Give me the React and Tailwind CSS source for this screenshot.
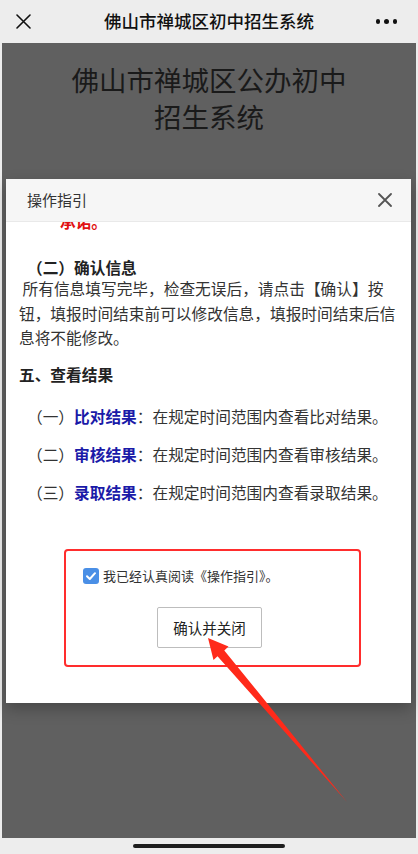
export default function App() {
  const font = { fontFamily: '"Noto Sans CJK SC", "Noto Sans", sans-serif' };
  return (
    <div className="relative w-[418px] h-[854px] overflow-hidden bg-[#ededed] flex flex-col" style={font}>
      {/* top bar */}
      <header className="h-[43px] shrink-0 flex items-center justify-between pl-[16px] pr-[21px] relative">
        <svg width="15" height="15" viewBox="0 0 15 15" className="block">
          <path d="M1 1 L14 14 M14 1 L1 14" stroke="#111" strokeWidth="1.6" strokeLinecap="round" />
        </svg>
        <div className="absolute left-0 right-0 top-0 h-[43px] flex items-center justify-center text-[17.5px] text-[#111] font-medium pointer-events-none">
          佛山市禅城区初中招生系统
        </div>
        <div className="flex gap-[4px] items-center">
          <span className="w-[4.5px] h-[4.5px] rounded-full bg-[#111]" />
          <span className="w-[4.5px] h-[4.5px] rounded-full bg-[#111]" />
          <span className="w-[4.5px] h-[4.5px] rounded-full bg-[#111]" />
        </div>
      </header>

      {/* overlay page */}
      <main className="flex-1 mx-[2px] bg-[#606060] flex flex-col">
        <div className="pt-[18px] text-center text-[27.5px] leading-[37px] text-[#1a1a1a] font-normal">
          佛山市禅城区公办初中
          <br />
          招生系统
        </div>

        {/* dialog */}
        <div className="mt-[44px] ml-[4px] w-[405px] h-[524px] bg-white flex flex-col shadow-[0_6px_14px_rgba(0,0,0,0.25)]">
          <div className="h-[43px] shrink-0 bg-[#f6f6f6] border-b border-[#e9e9e9] flex items-center justify-between pl-[21px] pr-[19px] relative z-10">
            <span className="text-[15px] text-[#333]">操作指引</span>
            <svg width="14" height="14" viewBox="0 0 14 14" className="block">
              <path d="M1 1 L13 13 M13 1 L1 13" stroke="#555" strokeWidth="1.8" strokeLinecap="round" />
            </svg>
          </div>
          <div className="flex-1 overflow-hidden px-[13px] text-[15.7px] text-[#333]">
            <div className="mt-[-12px] h-[24px] leading-[24px] pl-[41px] text-[#e01010] font-bold">承诺。</div>

            <div className="mt-[24px] leading-[19px] font-bold text-[#222] pl-[8px]">（二）确认信息</div>
            <p className="leading-[24.5px]">&nbsp;所有信息填写完毕，检查无误后，请点击【确认】按钮，填报时间结束前可以修改信息，填报时间结束后信息将不能修改。</p>

            <div className="mt-[12.5px] leading-[24px] font-bold text-[#222]">五、查看结果</div>

            <div className="mt-[18px] leading-[24px] pl-[8px]">
              （一）<span className="font-bold text-[#1a1aa8]">比对结果</span>：在规定时间范围内查看比对结果。
            </div>
            <div className="mt-[14px] leading-[24px] pl-[8px]">
              （二）<span className="font-bold text-[#1a1aa8]">审核结果</span>：在规定时间范围内查看审核结果。
            </div>
            <div className="mt-[14px] leading-[24px] pl-[8px]">
              （三）<span className="font-bold text-[#1a1aa8]">录取结果</span>：在规定时间范围内查看录取结果。
            </div>

            <div className="mt-[44px] ml-[45px] w-[297px] h-[118px] border-2 border-[#ff2d2d] rounded-[4px] pt-[17px] pl-[17px]">
              <div className="flex items-center gap-[4px] h-[16px]">
                <span className="w-[16px] h-[16px] rounded-[3px] bg-[#4a8fe6] flex items-center justify-center">
                  <svg width="12" height="12" viewBox="0 0 12 12">
                    <path d="M2 6.2 L4.8 9 L10 3.2" stroke="white" strokeWidth="2" fill="none" strokeLinecap="round" strokeLinejoin="round" />
                  </svg>
                </span>
                <span className="text-[13px] text-[#333] leading-[16px]">我已经认真阅读《操作指引》。</span>
              </div>
              <button className="mt-[23px] ml-[74px] w-[105px] h-[41px] border border-[#bdbdbd] rounded-[2px] bg-white text-[14.5px] text-[#222] flex items-center justify-center">
                确认并关闭
              </button>
            </div>
          </div>
        </div>
      </main>

      {/* bottom bar */}
      <footer className="h-[16px] shrink-0 flex justify-center pt-[6px]">
        <div className="w-[152px] h-[4px] rounded-full bg-[#1e1e1e]" />
      </footer>

      {/* red arrow annotation */}
      <svg className="absolute left-0 top-0 pointer-events-none" width="418" height="854" viewBox="0 0 418 854">
        <polygon
          points="208,638 228.5,646.5 224.3,650.4 347,802 217.5,656.2 213.5,660"
          fill="#ff2a1a"
        />
      </svg>
    </div>
  );
}
